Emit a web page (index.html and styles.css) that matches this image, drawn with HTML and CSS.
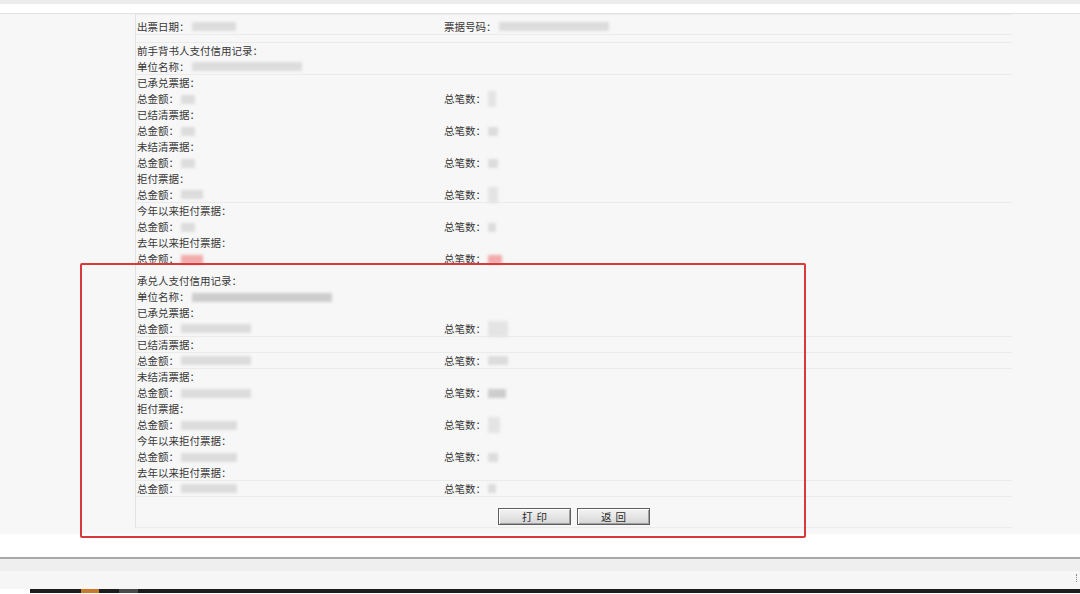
FILE: index.html
```html
<!DOCTYPE html>
<html lang="zh">
<head>
<meta charset="utf-8">
<title>票据信用记录</title>
<link rel="stylesheet" href="styles.css">
</head>
<body>
<div class="topstrip"></div>
<div class="main">
  <div class="sheet">
    <div class="row line"><div class="c1">出票日期：<span class="blur" style="width:44px"></span></div><div class="c2">票据号码：<span class="blur" style="width:110px"></span></div></div>
    <div class="gap line-b"></div>
    <div class="row"><div class="c1">前手背书人支付信用记录：</div></div>
    <div class="row line"><div class="c1">单位名称：<span class="blur" style="width:110px"></span></div></div>
    <div class="row"><div class="c1">已承兑票据：</div></div>
    <div class="row"><div class="c1">总金额：<span class="blur" style="width:14px"></span></div><div class="c2">总笔数：<span class="blur tall" style="width:8px"></span></div></div>
    <div class="row"><div class="c1">已结清票据：</div></div>
    <div class="row"><div class="c1">总金额：<span class="blur" style="width:14px"></span></div><div class="c2">总笔数：<span class="blur" style="width:10px"></span></div></div>
    <div class="row"><div class="c1">未结清票据：</div></div>
    <div class="row"><div class="c1">总金额：<span class="blur" style="width:14px"></span></div><div class="c2">总笔数：<span class="blur" style="width:10px"></span></div></div>
    <div class="row"><div class="c1">拒付票据：</div></div>
    <div class="row line"><div class="c1">总金额：<span class="blur" style="width:22px"></span></div><div class="c2">总笔数：<span class="blur tall" style="width:10px"></span></div></div>
    <div class="row"><div class="c1">今年以来拒付票据：</div></div>
    <div class="row"><div class="c1">总金额：<span class="blur" style="width:14px"></span></div><div class="c2">总笔数：<span class="blur" style="width:8px"></span></div></div>
    <div class="row"><div class="c1">去年以来拒付票据：</div></div>
    <div class="row"><div class="c1">总金额：<span class="blur red" style="width:22px"></span></div><div class="c2">总笔数：<span class="blur red" style="width:14px"></span></div></div>
    <div class="gap2"></div>
    <div class="row"><div class="c1">承兑人支付信用记录：</div></div>
    <div class="row"><div class="c1">单位名称：<span class="blur dark" style="width:140px"></span></div></div>
    <div class="row"><div class="c1">已承兑票据：</div></div>
    <div class="row line"><div class="c1">总金额：<span class="blur" style="width:70px"></span></div><div class="c2">总笔数：<span class="blur tall" style="width:20px"></span></div></div>
    <div class="row line"><div class="c1">已结清票据：</div></div>
    <div class="row line"><div class="c1">总金额：<span class="blur" style="width:70px"></span></div><div class="c2">总笔数：<span class="blur" style="width:20px"></span></div></div>
    <div class="row"><div class="c1">未结清票据：</div></div>
    <div class="row"><div class="c1">总金额：<span class="blur" style="width:70px"></span></div><div class="c2">总笔数：<span class="blur dark" style="width:18px"></span></div></div>
    <div class="row"><div class="c1">拒付票据：</div></div>
    <div class="row"><div class="c1">总金额：<span class="blur" style="width:56px"></span></div><div class="c2">总笔数：<span class="blur tall" style="width:12px"></span></div></div>
    <div class="row"><div class="c1">今年以来拒付票据：</div></div>
    <div class="row"><div class="c1">总金额：<span class="blur" style="width:56px"></span></div><div class="c2">总笔数：<span class="blur" style="width:10px"></span></div></div>
    <div class="row line"><div class="c1">去年以来拒付票据：</div></div>
    <div class="row line"><div class="c1">总金额：<span class="blur" style="width:56px"></span></div><div class="c2">总笔数：<span class="blur" style="width:8px"></span></div></div>
    <div class="btnrow">
      <button class="btn">打印</button>
      <button class="btn">返回</button>
    </div>
  </div>
  <div class="redbox"></div>
</div>
<div class="bottom">
  <div class="statusbar"><span class="grip"></span></div>
  <div class="taskbar"><span class="tb-orange"></span><span class="tb-gray"></span></div>
</div>
</body>
</html>
```

FILE: styles.css
```css
* { box-sizing: border-box; }
html, body { margin: 0; padding: 0; }
body {
  width: 1080px;
  height: 594px;
  overflow: hidden;
  background: #ffffff;
  font-family: "Noto Sans CJK SC", "Noto Sans", sans-serif;
  font-size: 10.5px;
  color: #383838;
}
.topstrip {
  height: 4px;
  background: #ececec;
  margin-bottom: 9px;
}
.main {
  position: relative;
  height: 521px;
  background: #f7f7f7;
  border-top: 1px solid #e2e2e2;
}
.sheet {
  margin-left: 135px;
  width: 877px;
  padding-top: 4px;
  height: 514px;
  border-left: 1px solid #e3e3e3;
  border-top: 1px solid #ececec;
  border-bottom: 1px solid #ececec;
}
.row {
  display: flex;
  height: 16px;
  line-height: 16px;
  align-items: center;
}
.row.line, .gap.line-b { border-bottom: 1px solid #ebebeb; }
.gap { height: 8px; }
.gap2 { height: 6px; }
.c1 {
  width: 308px;
  padding-left: 1px;
  display: flex;
  align-items: center;
  white-space: nowrap;
}
.c2 {
  display: flex;
  align-items: center;
  white-space: nowrap;
}
.blur {
  display: inline-block;
  height: 9px;
  background: #dcdcdc;
  filter: blur(1.8px);
  margin-left: 2px;
}
.blur.tall { height: 16px; background: #e4e4e4; }
.blur.dark { background: #cdcdcd; }
.blur.red { background: #f2aaaa; }
.btnrow {
  display: flex;
  justify-content: center;
  gap: 6px;
  margin-top: 11px;
}
.btn {
  width: 73px;
  height: 17px;
  padding: 0;
  font-family: "Noto Sans CJK SC", sans-serif;
  font-size: 10.5px;
  letter-spacing: 4px;
  text-indent: 4px;
  color: #2a2a2a;
  border: 1px solid #5f5f5f;
  box-shadow: inset 1px 1px 0 #ffffff, inset -1px -1px 0 #a0a0a0;
  background: linear-gradient(#f4f4f4, #d6d6d6);
  line-height: 14px;
}
.redbox {
  position: absolute;
  left: 80px;
  top: 249px;
  width: 726px;
  height: 275px;
  border: 2px solid #d8393a;
  border-radius: 2px;
  pointer-events: none;
}
.bottom {
  margin-top: 23px;
  border-top: 2px solid #a9a9a9;
}
.statusbar {
  position: relative;
  height: 30px;
  background: linear-gradient(#efefef 0, #efefef 40%, #f6f6f6 40%);
}
.grip {
  position: absolute;
  right: 0;
  top: 15px;
  width: 4px;
  height: 8px;
  border-left: 1px dotted #888;
}
.taskbar {
  position: relative;
  height: 4px;
  margin-left: 30px;
  background: #1d1d1d;
}
.tb-orange {
  position: absolute;
  left: 51px;
  top: 0;
  width: 18px;
  height: 4px;
  background: #c77a2c;
}
.tb-gray {
  position: absolute;
  left: 89px;
  top: 0;
  width: 19px;
  height: 4px;
  background: #4a4a4a;
}
```
